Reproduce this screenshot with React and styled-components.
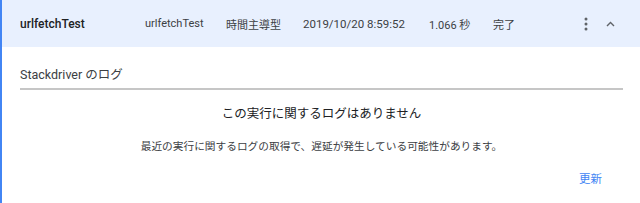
import React from "react";
import styled, { createGlobalStyle } from "styled-components";

const GlobalStyle = createGlobalStyle`
  html, body {
    margin: 0;
    padding: 0;
    background: #fff;
  }
  body {
    font-family: Roboto, "Noto Sans CJK JP", sans-serif;
    color: #3c4043;
  }
`;

const Card = styled.div`
  width: 640px;
  height: 203px;
  box-sizing: border-box;
  border-left: 2px solid #4285f4;
  display: flex;
  flex-direction: column;
`;

const Header = styled.div`
  height: 47px;
  background: #e8f0fe;
  display: flex;
  align-items: center;
  padding-left: 18px;
  color: #3c4043;
`;

const Cell = styled.div`
  width: ${p => p.w}px;
  flex: none;
  font-size: ${p => p.size || 11}px;
  font-weight: ${p => (p.bold ? 500 : 400)};
  color: ${p => (p.bold ? "#202124" : "#3c4043")};
  white-space: nowrap;
`;

const IconButton = styled.div`
  width: 24px;
  height: 24px;
  display: flex;
  align-items: center;
  justify-content: center;
  color: #5f6368;
`;

const Body = styled.div`
  padding: 0 17px 0 18px;
  display: flex;
  flex-direction: column;
`;

const SectionTitle = styled.div`
  font-size: 12.5px;
  color: #3c4043;
  padding-top: 17px;
  padding-bottom: 5px;
  border-bottom: 2px solid #c6c6c6;
`;

const EmptyTitle = styled.div`
  text-align: center;
  font-size: 12.5px;
  line-height: 17px;
  color: #202124;
  margin-top: 15px;
`;

const EmptyText = styled.div`
  text-align: center;
  font-size: 10.7px;
  line-height: 14px;
  color: #3c4043;
  margin-top: 18px;
`;

const Footer = styled.div`
  display: flex;
  justify-content: flex-end;
  margin-top: 17px;
  padding-right: 21px;
`;

const LinkButton = styled.span`
  color: #4285f4;
  font-size: 11.5px;
  line-height: 16px;
`;

const Kebab = () => (
  <svg width="4" height="14" viewBox="0 0 4 14">
    <circle cx="2" cy="2" r="1.5" fill="currentColor" />
    <circle cx="2" cy="7" r="1.5" fill="currentColor" />
    <circle cx="2" cy="12" r="1.5" fill="currentColor" />
  </svg>
);

const ChevronUp = () => (
  <svg width="9" height="6" viewBox="0 0 9 6">
    <path d="M1 5 L4.5 1.5 L8 5" fill="none" stroke="currentColor" strokeWidth="1.4" />
  </svg>
);

export default function App() {
  return (
    <>
      <GlobalStyle />
      <Card>
        <Header>
          <Cell w={125} size={12} bold>urlfetchTest</Cell>
          <Cell w={81}>urlfetchTest</Cell>
          <Cell w={77}>時間主導型</Cell>
          <Cell w={126} size={11.5}>2019/10/20 8:59:52</Cell>
          <Cell w={64}>1.066 秒</Cell>
          <Cell w={81}>完了</Cell>
          <IconButton><Kebab /></IconButton>
          <IconButton><ChevronUp /></IconButton>
        </Header>
        <Body>
          <SectionTitle>Stackdriver のログ</SectionTitle>
          <EmptyTitle>この実行に関するログはありません</EmptyTitle>
          <EmptyText>最近の実行に関するログの取得で、遅延が発生している可能性があります。</EmptyText>
          <Footer>
            <LinkButton>更新</LinkButton>
          </Footer>
        </Body>
      </Card>
    </>
  );
}
